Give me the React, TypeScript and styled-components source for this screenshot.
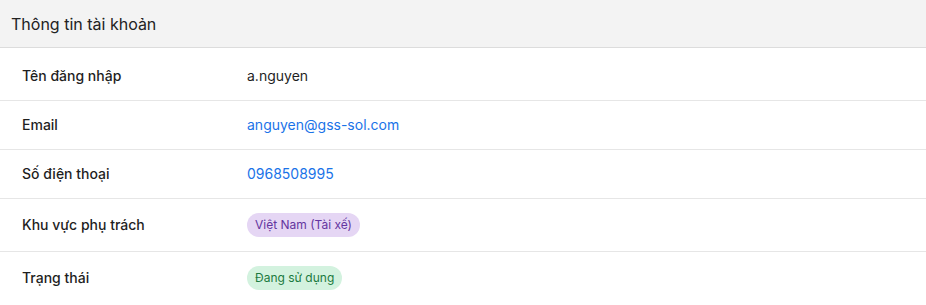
import React, { FC } from 'react';
import styled, { createGlobalStyle } from 'styled-components';

const GlobalStyle = createGlobalStyle`
  html, body {
    margin: 0;
    padding: 0;
    background: #ffffff;
  }
  body {
    font-family: Inter, "Noto Sans", "Liberation Sans", sans-serif;
    color: #1f1f1f;
  }
`;

type Tone = 'purple' | 'green';

interface Field {
  label: string;
  value: string;
  kind?: 'text' | 'link' | 'tag';
  tone?: Tone;
}

const fields: Field[] = [
  { label: 'Tên đăng nhập', value: 'a.nguyen' },
  { label: 'Email', value: 'anguyen@gss-sol.com', kind: 'link' },
  { label: 'Số điện thoại', value: '0968508995', kind: 'link' },
  { label: 'Khu vực phụ trách', value: 'Việt Nam (Tài xế)', kind: 'tag', tone: 'purple' },
  { label: 'Trạng thái', value: 'Đang sử dụng', kind: 'tag', tone: 'green' },
];

const tones: Record<Tone, { bg: string; fg: string }> = {
  purple: { bg: '#e5d6f4', fg: '#6435a0' },
  green: { bg: '#d3f2df', fg: '#1b7a40' },
};

const Panel = styled.section`
  width: 926px;
  background: #fff;
`;

const Header = styled.header`
  height: 47px;
  display: flex;
  align-items: center;
  padding: 0 11px;
  background: #f3f3f3;
  border-bottom: 1px solid #dcdcdc;
  font-size: 16px;
  color: #222;
`;

const Row = styled.div<{ $first?: boolean; $tall?: boolean }>`
  display: grid;
  grid-template-columns: 225px 1fr;
  align-items: center;
  padding: ${(p) => (p.$first ? '18px' : '14px')} 22px 14px;
  min-height: ${(p) => (p.$tall ? '24px' : '20px')};
  border-bottom: 1px solid #e6e6e6;
  font-size: 14px;
  line-height: 20px;

  &:last-child {
    border-bottom: none;
  }
`;

const Label = styled.div`
  font-weight: 500;
  color: #1f1f1f;
`;

const Value = styled.div`
  color: #1f1f1f;
`;

const Link = styled.a`
  color: #1a73e8;
  text-decoration: none;
`;

const Tag = styled.span<{ $tone: Tone }>`
  display: inline-flex;
  align-items: center;
  height: 24px;
  padding: 0 8px;
  border-radius: 12px;
  font-size: 12px;
  background: ${(p) => tones[p.$tone].bg};
  color: ${(p) => tones[p.$tone].fg};
`;

const renderValue = (f: Field) => {
  if (f.kind === 'link') return <Link href="#">{f.value}</Link>;
  if (f.kind === 'tag') return <Tag $tone={f.tone || 'purple'}>{f.value}</Tag>;
  return f.value;
};

const App: FC = () => (
  <>
    <GlobalStyle />
    <Panel>
      <Header>Thông tin tài khoản</Header>
      {fields.map((f, i) => (
        <Row key={f.label} $first={i === 0} $tall={f.kind === 'tag'}>
          <Label>{f.label}</Label>
          <Value>{renderValue(f)}</Value>
        </Row>
      ))}
    </Panel>
  </>
);

export default App;
